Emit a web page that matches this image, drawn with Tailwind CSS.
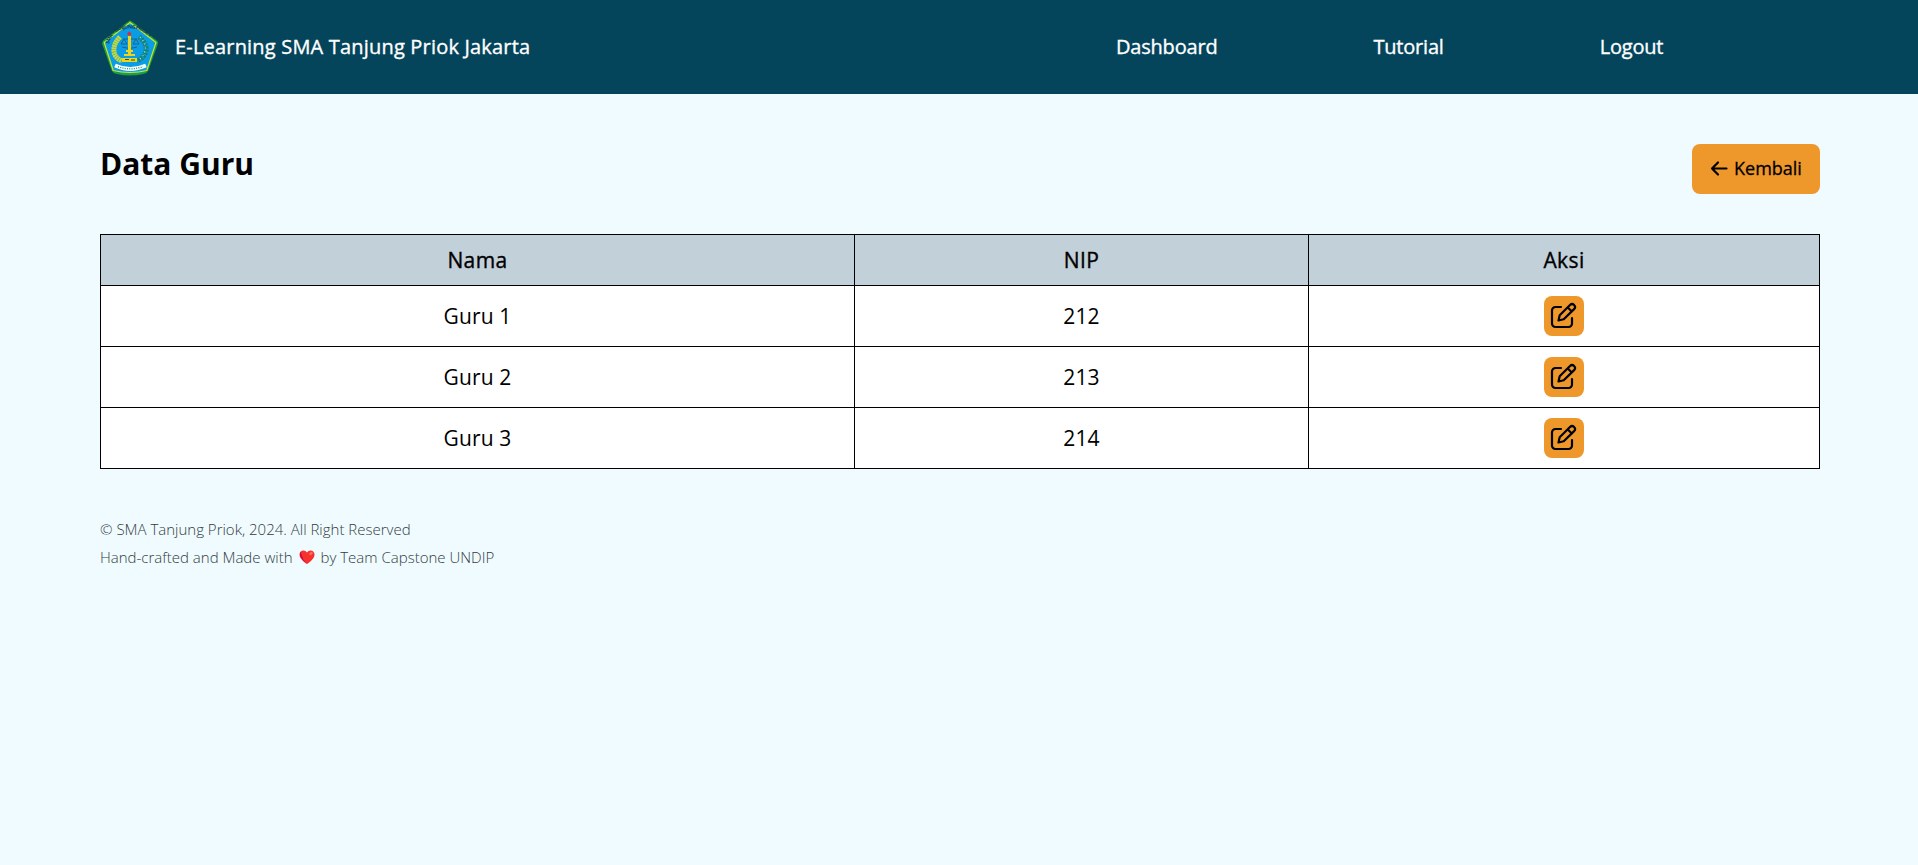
<!DOCTYPE html>
<html lang="id">
<head>
<meta charset="utf-8">
<title>Data Guru</title>
<script src="https://cdn.jsdelivr.net/npm/@tailwindcss/browser@4"></script>
</head>
<body class="min-h-screen bg-[#effbff] font-['Open_Sans',sans-serif] text-black">
<svg class="hidden">
  <symbol id="edit" viewBox="0 0 28 28">
    <g fill="none" stroke="#000" stroke-width="2.200" stroke-linecap="round" stroke-linejoin="round">
      <path d="M11 5H5.500A3.500 3.500 0 0 0 2 8.500V21.500A3.500 3.500 0 0 0 5.500 25H18.500a3.500 3.500 0 0 0 3.500-3.500V16"/>
      <path d="M8.500 18.500l1.200-5.200L20 3a2.850 2.850 0 0 1 4.100 4.100L13.700 17.300zM17.800 5.500l4 4"/>
    </g>
  </symbol>
</svg>
<nav class="flex h-[94px] items-center bg-[#04455c] pl-[100px] text-xl font-medium text-white [-webkit-text-stroke:0.35px_white]">
  <svg class="h-[60px] w-[60px] [-webkit-text-stroke:0]" viewBox="0 0 60 60">
    <path d="M30 4.500Q31 4.500 56.500 24.500Q57.500 26 56.500 28L47.500 53Q46.500 55.500 43 56Q30 59 17 56Q13.500 55.500 12.500 53L3.500 28Q2.500 26 4 24Z" fill="#0b9ce6" stroke="#229b3a" stroke-width="2"/>
    <path d="M30 5.500L56 25.500L46.800 53.500Q30 57.500 13.200 53.500L4.200 25.500Z" fill="none" stroke="#c7e82c" stroke-width="1.200"/>
    <path id="arc" d="M9 27Q13 11.500 30 11.500T51 27" fill="none"/>
    <text font-size="5" font-weight="700" fill="#123c55" textLength="50"><textPath href="#arc">SMA * TANJUNG PRIOK *</textPath></text>
    <path d="M20 20Q13 27 14 35Q15 41 22 44" fill="none" stroke="#c8d936" stroke-width="5" stroke-dasharray="2 .4"/>
    <path d="M39 20Q47 26 46 34Q45 40 37 44" fill="none" stroke="#16836b" stroke-width="5" stroke-dasharray="2 1"/>
    <path d="M40 20Q47 27 45 34T38 43" fill="none" stroke="#b7dfd1" stroke-width="1.200" stroke-dasharray="1 3"/>
    <path d="M23 22h14M24 22l3 5h-6zM36 22l3 5h-6zM22 30q8 3 15 0" fill="none" stroke="#17658d" stroke-width="1"/>
    <path d="M28 19h3v14h2v2h-2v2h4v2h-11v-2h4v-2h-2v-2h2zM22 41h15v4H22z" fill="#ecd51a"/>
    <path d="M27.500 16l1.800-1.500 1.800 1.500v2.500h-3.600z" fill="#d52e35"/>
    <path d="M25 42.500h4M31 43h4" stroke="#284b52" stroke-width="1.200"/>
    <path d="M15 48.500Q30 55.500 46 48.500" fill="none" stroke="#f5fff9" stroke-width="4"/>
    <path d="M18 49.700Q30 54 43 49.700" fill="none" stroke="#2b8b75" stroke-width="1.300" stroke-dasharray="1 1.300"/>
  </svg>
  <span class="ml-[15px] w-[941px] tracking-[0.19px]">E-Learning SMA Tanjung Priok Jakarta</span>
  <div class="flex gap-[156px] tracking-[-0.2px]"><a>Dashboard</a><a>Tutorial</a><a>Logout</a></div>
</nav>
<main class="pl-[100px] pr-[98px] pt-[50px]">
  <div class="flex h-[50px] items-start justify-between">
    <h1 class="text-3xl leading-10 font-bold">Data Guru</h1>
    <a class="flex h-[50px] w-32 items-center rounded-lg bg-[#ee982b] pb-0.5 pl-[18px] text-lg font-medium [-webkit-text-stroke:0.3px_black]">
      <svg class="mr-[6px] h-[18px] w-[18px]" viewBox="0 0 18 18" fill="none" stroke="#000" stroke-width="2.200" stroke-linecap="round" stroke-linejoin="round"><path d="M16.500 9.500H2M8 3.500L2 9.500l6 6"/></svg>
      <span>Kembali</span>
    </a>
  </div>
  <table class="mt-10 w-[1720px] table-fixed border-separate border-spacing-0 border-t border-l border-black bg-white text-center text-[21px] leading-7 tracking-[0.15px]">
    <colgroup><col class="w-[754px]"><col class="w-[454px]"><col class="w-[511px]"></colgroup>
    <thead><tr class="h-[51px] bg-[#c1d0d9] tracking-[0.4px] [-webkit-text-stroke:0.35px_black]"><th class="border-r border-b border-black p-0 font-medium">Nama</th><th class="border-r border-b border-black p-0 font-medium">NIP</th><th class="border-r border-b border-black p-0 font-medium">Aksi</th></tr></thead>
    <tbody>
      <tr class="h-[61px]"><td class="border-r border-b border-black p-0">Guru 1</td><td class="border-r border-b border-black p-0">212</td><td class="border-r border-b border-black p-0"><a class="mx-auto flex h-10 w-10 items-center justify-center rounded-lg bg-[#ee982b]"><svg class="h-7 w-7"><use href="#edit"/></svg></a></td></tr>
      <tr class="h-[61px]"><td class="border-r border-b border-black p-0">Guru 2</td><td class="border-r border-b border-black p-0">213</td><td class="border-r border-b border-black p-0"><a class="mx-auto flex h-10 w-10 items-center justify-center rounded-lg bg-[#ee982b]"><svg class="h-7 w-7"><use href="#edit"/></svg></a></td></tr>
      <tr class="h-[61px]"><td class="border-r border-b border-black p-0">Guru 3</td><td class="border-r border-b border-black p-0">214</td><td class="border-r border-b border-black p-0"><a class="mx-auto flex h-10 w-10 items-center justify-center rounded-lg bg-[#ee982b]"><svg class="h-7 w-7"><use href="#edit"/></svg></a></td></tr>
    </tbody>
  </table>
</main>
<footer class="mt-[46px] px-[100px] text-[15px] leading-7 font-light text-[#343b3e]">
  <p>© SMA Tanjung Priok, 2024. All Right Reserved</p>
  <p class="flex items-center">Hand-crafted and Made with
    <svg class="mx-[6px] h-[14px] w-4" viewBox="0 0 16 14"><path d="M8 14C5 12 .5 8.500.5 4.500.5 0 6-1 8 2.500 10-1 15.500 0 15.500 4.500 15.500 8.500 11 12 8 14z" fill="#f8312f"/><path d="M1 3Q0 8 8 14 3 9 2 2z" fill="#ca0b4a"/><ellipse cx="12" cy="3.500" rx="2" ry="1.300" transform="rotate(-40 12 3.500)" fill="#f37366"/></svg>
    by Team Capstone UNDIP</p>
</footer>
</body>
</html>
